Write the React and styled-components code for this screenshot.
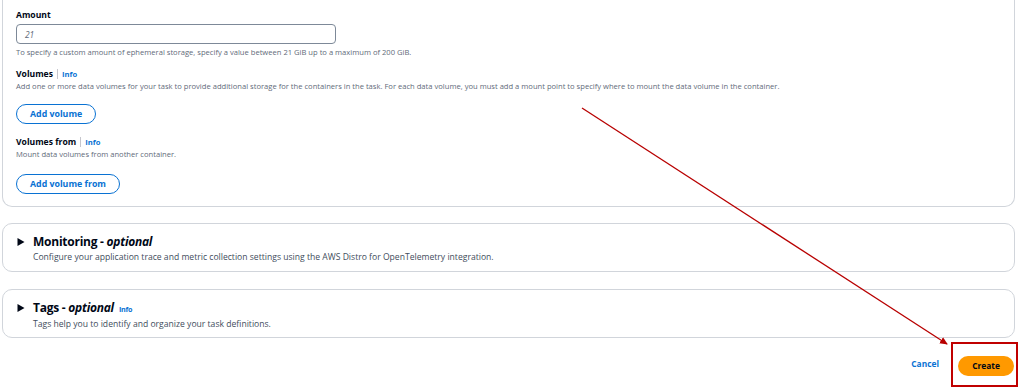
import React from "react";
import styled, { createGlobalStyle } from "styled-components";

const Global = createGlobalStyle`
  html, body {
    margin: 0;
    padding: 0;
    background: #ffffff;
  }
  body {
    font-family: "Open Sans", "Noto Sans", Arial, sans-serif;
    color: #000716;
  }
`;

const Page = styled.div`
  position: relative;
  width: 1024px;
  height: 390px;
  overflow: hidden;
  padding: 0 9px 0 2px;
  box-sizing: border-box;
`;

const Panel = styled.div`
  border: 1px solid #d1d5db;
  border-top: none;
  border-radius: 0 0 10px 10px;
  padding: 9px 13px 12px 13px;
  display: flex;
  flex-direction: column;
`;

const Label = styled.div`
  display: flex;
  align-items: center;
  font-size: 8.6px;
  font-weight: 700;
  line-height: 12px;
  margin-top: ${(p) => p.$gap || 0}px;
`;

const Divider = styled.span`
  width: 1px;
  height: 10px;
  background: #c6c6cd;
  margin: 0 4px 0 4px;
`;

const Info = styled.a`
  color: #0972d3;
  font-weight: 700;
  font-size: ${(p) => p.$size || 7.6}px;
  text-decoration: none;
  cursor: pointer;
`;

const Hint = styled.div`
  font-size: 7.6px;
  line-height: 12px;
  color: #5f6b7a;
  white-space: nowrap;
`;

const Input = styled.div`
  margin-top: 3px;
  width: 320px;
  height: 20px;
  box-sizing: border-box;
  border: 1px solid #7d8998;
  border-radius: 4px;
  padding: 0 8px;
  display: flex;
  align-items: center;
  font-size: 8.4px;
  font-style: italic;
  color: #5f6b7a;
  margin-bottom: 2px;
`;

const Outline = styled.button`
  align-self: flex-start;
  margin-top: ${(p) => p.$gap || 0}px;
  height: 20px;
  padding: 0 13px;
  border: 1.5px solid #0972d3;
  border-radius: 12px;
  background: #fff;
  color: #0972d3;
  font-family: inherit;
  font-size: 8.8px;
  font-weight: 700;
  cursor: pointer;
`;

const Card = styled.div`
  margin-top: ${(p) => p.$gap}px;
  border: 1px solid #d1d5db;
  border-radius: 10px;
  padding: 9px 14px 7px 14px;
  display: flex;
  gap: 8px;
  height: 49px;
  box-sizing: border-box;
`;

const Caret = styled.svg`
  width: 8px;
  height: 8px;
  margin-top: 5px;
  flex-shrink: 0;
`;

const CardBody = styled.div`
  display: flex;
  flex-direction: column;
`;

const CardTitle = styled.div`
  display: flex;
  align-items: baseline;
  gap: 5px;
  font-size: 12px;
  font-weight: 700;
  line-height: 18px;
  letter-spacing: -0.25px;

  em {
    font-style: italic;
  }
`;

const CardText = styled.div`
  font-size: 8.6px;
  line-height: 13px;
  color: #414d5c;
`;

const Actions = styled.div`
  margin-top: 14px;
  display: flex;
  justify-content: flex-end;
  align-items: center;
  gap: 19px;
  padding-right: 1px;
`;

const Cancel = styled.a`
  color: #0972d3;
  font-size: 8.4px;
  font-weight: 700;
  cursor: pointer;
`;

const Highlight = styled.div`
  position: relative;

  &::after {
    content: "";
    position: absolute;
    left: -7px;
    right: -4px;
    top: -10px;
    bottom: -11px;
    border: 2.5px solid #c00000;
    pointer-events: none;
  }
`;

const Primary = styled.button`
  width: 56px;
  height: 20px;
  border: none;
  border-radius: 12px;
  background: #ff9900;
  color: #000716;
  font-family: inherit;
  font-size: 8.4px;
  font-weight: 700;
  cursor: pointer;
`;

const Overlay = styled.svg`
  position: absolute;
  left: 0;
  top: 0;
  width: 1024px;
  height: 390px;
  pointer-events: none;
`;

const Expander = ({ gap, title, text, info }) => (
  <Card $gap={gap}>
    <Caret viewBox="0 0 8 8">
      <polygon points="0.5,0 7.5,4 0.5,8" fill="#000716" />
    </Caret>
    <CardBody>
      <CardTitle>
        <span>
          {title} - <em>optional</em>
        </span>
        {info && <Info $size={7.2}>Info</Info>}
      </CardTitle>
      <CardText>{text}</CardText>
    </CardBody>
  </Card>
);

export default function App() {
  return (
    <Page>
      <Global />
      <Panel>
        <Label>Amount</Label>
        <Input>21</Input>
        <Hint>
          To specify a custom amount of ephemeral storage, specify a value between 21 GiB up to a maximum of 200 GiB.
        </Hint>
        <Label $gap={10}>
          Volumes
          <Divider />
          <Info>Info</Info>
        </Label>
        <Hint>
          Add one or more data volumes for your task to provide additional storage for the containers in the task. For each data volume, you must add a mount point to specify where to mount the data volume in the container.
        </Hint>
        <Outline $gap={12}>Add volume</Outline>
        <Label $gap={12}>
          Volumes from
          <Divider />
          <Info>Info</Info>
        </Label>
        <Hint>Mount data volumes from another container.</Hint>
        <Outline $gap={14}>Add volume from</Outline>
      </Panel>

      <Expander
        gap={16}
        title="Monitoring"
        text="Configure your application trace and metric collection settings using the AWS Distro for OpenTelemetry integration."
      />
      <Expander
        gap={17}
        title="Tags"
        info
        text="Tags help you to identify and organize your task definitions."
      />

      <Actions>
        <Cancel>Cancel</Cancel>
        <Highlight>
          <Primary>Create</Primary>
        </Highlight>
      </Actions>

      <Overlay viewBox="0 0 1024 390">
        <defs>
          <marker id="head" markerWidth="8" markerHeight="8" refX="7" refY="4" orient="auto" markerUnits="userSpaceOnUse">
            <polygon points="0,0.5 8,4 0,7.5" fill="#b80000" />
          </marker>
        </defs>
        <line x1="582" y1="108" x2="947" y2="344" stroke="#b80000" strokeWidth="1.3" markerEnd="url(#head)" />
      </Overlay>
    </Page>
  );
}
